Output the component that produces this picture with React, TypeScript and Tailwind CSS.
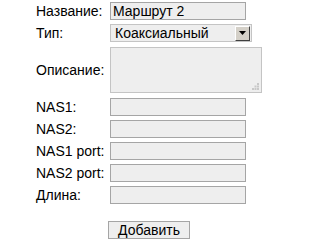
export default function App() {
  const rows = [
    { label: 'NAS1:' },
    { label: 'NAS2:' },
    { label: 'NAS1 port:' },
    { label: 'NAS2 port:' },
    { label: 'Длина:' },
  ];

  const inputCls =
    'h-[18px] w-[136px] border border-[#a5a5a5] bg-[#eeeeee] px-[2px] text-[14px] leading-[16px] text-black outline-none';

  return (
    <div className="w-[280px] h-[247px] bg-white font-['Liberation_Sans',Arial,sans-serif] text-[14px] text-black">
      <div className="flex flex-col pl-[36px] pt-[2px]">
        {/* Название */}
        <div className="flex items-center h-[18px]">
          <span className="w-[74px] leading-none">Название:</span>
          <div className={`${inputCls} flex items-center`}>Маршрут 2</div>
        </div>

        {/* Тип */}
        <div className="flex items-center h-[18px] mt-[4px]">
          <span className="w-[74px] leading-none">Тип:</span>
          <div className="h-[18px] w-[142px] border border-[#c4c4c4] bg-[#eeeeee] flex items-center justify-between pl-[4px] pr-px">
            <span className="leading-none">Коаксиальный</span>
            <div className="h-[15px] w-[15px] bg-[#d4d0c8] border-t border-l border-t-white border-l-white border-r border-b border-r-[#404040] border-b-[#404040] flex items-center justify-center">
              <svg width="7" height="4" viewBox="0 0 7 4">
                <path d="M0 0h7L3.5 4z" fill="#000" />
              </svg>
            </div>
          </div>
        </div>

        {/* Описание */}
        <div className="flex items-center h-[46px] mt-[5px]">
          <span className="w-[74px] leading-none">Описание:</span>
          <div className="relative h-[46px] w-[152px] border border-[#c4c4c4] bg-[#eeeeee]">
            <svg className="absolute right-[2px] bottom-[2px]" width="7" height="7" viewBox="0 0 7 7">
              <rect x="5" y="0" width="2" height="2" fill="#c8c8c8" />
              <rect x="2.5" y="2.5" width="2" height="2" fill="#c8c8c8" />
              <rect x="5" y="2.5" width="2" height="2" fill="#c8c8c8" />
              <rect x="0" y="5" width="2" height="2" fill="#c8c8c8" />
              <rect x="2.5" y="5" width="2" height="2" fill="#c8c8c8" />
              <rect x="5" y="5" width="2" height="2" fill="#c8c8c8" />
            </svg>
          </div>
        </div>

        {/* NAS rows */}
        <div className="flex flex-col gap-[4px] mt-[5px]">
          {rows.map((r) => (
            <div key={r.label} className="flex items-center h-[18px]">
              <span className="w-[74px] leading-none">{r.label}</span>
              <div className={inputCls} />
            </div>
          ))}
        </div>

        {/* Добавить */}
        <div className="mt-[17px] pl-[72px]">
          <div className="h-[18px] w-[82px] border border-[#a5a5a5] bg-[#eeeeee] flex items-center justify-center leading-none">
            Добавить
          </div>
        </div>
      </div>
    </div>
  );
}
